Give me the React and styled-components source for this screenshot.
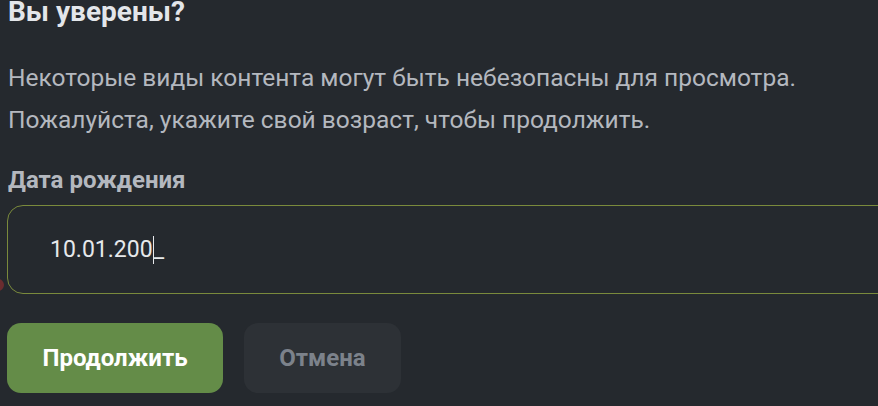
import styled, { createGlobalStyle } from 'styled-components'

const Global = createGlobalStyle`
  html, body {
    margin: 0;
    padding: 0;
    background: #25292e;
    overflow: hidden;
  }
  body {
    font-family: Roboto, "Liberation Sans", sans-serif;
  }
`

const Page = styled.div`
  position: relative;
  width: 878px;
  height: 406px;
  padding: 0 0 0 8px;
  box-sizing: border-box;
  display: flex;
  flex-direction: column;
`
const Title = styled.h2`
  margin: 0;
  font-size: 28px;
  line-height: 24px;
  font-weight: 700;
  color: #e3e6ea;
`
const Text = styled.p`
  margin: 0;
  font-size: 24.5px;
  line-height: 42px;
  color: #b4b8bf;
`
const Body = styled.div`
  margin-top: 33px;
`
const Label = styled.label`
  margin-top: 27px;
  font-size: 24px;
  font-weight: 700;
  line-height: 24px;
  color: #b4b8bf;
`
const Field = styled.div`
  position: relative;
  margin-top: 13px;
  margin-left: -1px;
  width: 900px;
  height: 89px;
  box-sizing: border-box;
  border: 1px solid #7a8a3c;
  border-radius: 16px;
  display: flex;
  align-items: center;
  padding-left: 42px;
  font-size: 23px;
  color: #e6e8eb;
`
const Caret = styled.span`
  display: inline-block;
  width: 1px;
  height: 28px;
  background: #e6e8eb;
`
const Dot = styled.span`
  position: absolute;
  left: -16px;
  bottom: 2px;
  width: 12px;
  height: 12px;
  border-radius: 50%;
  background: #6a2c2f;
`
const Actions = styled.div`
  margin-top: 29px;
  margin-left: -1px;
  display: flex;
  gap: 21px;
`
const Button = styled.button`
  height: 70px;
  width: ${p => (p.$primary ? '216px' : '157px')};
  border: none;
  border-radius: 14px;
  padding: 0;
  font-family: inherit;
  font-size: 24px;
  font-weight: 700;
  color: ${p => (p.$primary ? '#ffffff' : '#7c828b')};
  background: ${p => (p.$primary ? '#648c48' : '#2d3136')};
`

export default function App() {
  return (
    <Page>
      <Global />
      <Title>Вы уверены?</Title>
      <Body>
        <Text>Некоторые виды контента могут быть небезопасны для просмотра.</Text>
        <Text>Пожалуйста, укажите свой возраст, чтобы продолжить.</Text>
      </Body>
      <Label>Дата рождения</Label>
      <Field>
        <Dot />
        <span>10.01.200</span>
        <Caret />
        <span>_</span>
      </Field>
      <Actions>
        <Button $primary>Продолжить</Button>
        <Button>Отмена</Button>
      </Actions>
    </Page>
  )
}
